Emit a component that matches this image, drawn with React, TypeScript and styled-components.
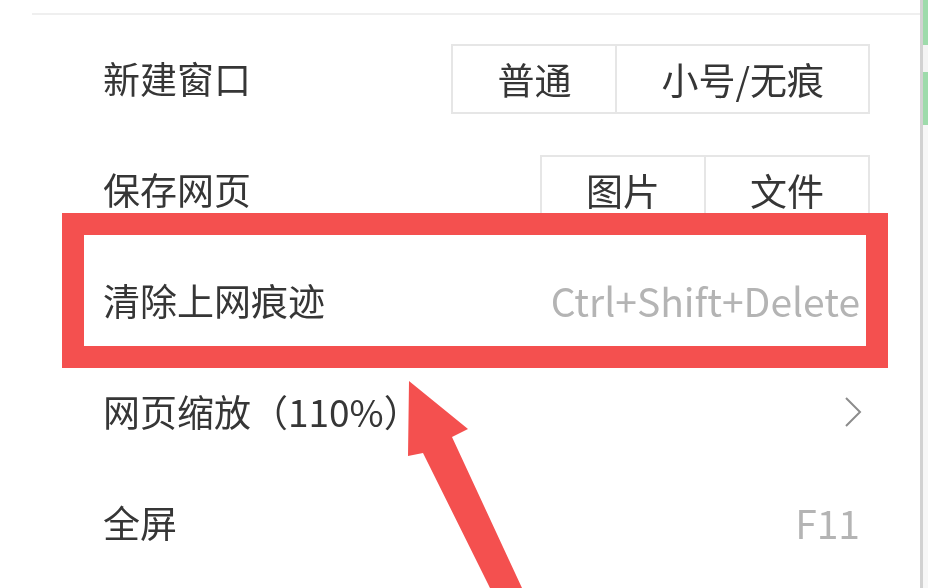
import * as React from 'react';
import styled, { createGlobalStyle } from 'styled-components';

const GlobalStyle = createGlobalStyle`
  html, body {
    margin: 0;
    padding: 0;
    background: #ffffff;
  }
  body {
    font-family: "Noto Sans CJK SC", "Noto Sans", sans-serif;
    color: #3a3a3a;
  }
`;

const Screen = styled.div`
  position: relative;
  display: flex;
  width: 928px;
  height: 588px;
  overflow: hidden;
  background: #fff;
  filter: blur(0.5px);
`;

const Menu = styled.div`
  flex: 1;
  display: flex;
  flex-direction: column;
  padding-left: 32px;
`;

const TopRule = styled.div`
  height: 2px;
  margin-top: 13px;
  margin-bottom: 8px;
  background: #efefef;
`;

const Row = styled.div`
  display: flex;
  align-items: center;
  justify-content: space-between;
  height: 111px;
  padding: 0 50px 0 71px;
`;

const Label = styled.span`
  font-size: 37px;
  line-height: 1;
  color: #363636;
  white-space: nowrap;
`;

const Shortcut = styled.span<{ $size?: number }>`
  font-family: "Noto Sans CJK SC", "Noto Sans", sans-serif;
  font-size: ${p => p.$size ?? 39}px;
  line-height: 1;
  color: #b4b4b4;
  margin-right: 10px;
  white-space: nowrap;
`;

const ButtonGroup = styled.div`
  display: flex;
  height: 70px;
  border: 2px solid #e6e6e6;
  box-sizing: border-box;
`;

const Segment = styled.div`
  display: flex;
  align-items: center;
  justify-content: center;
  padding: 0 44px;
  font-size: 37px;
  color: #363636;
  white-space: nowrap;

  & + & {
    border-left: 2px solid #e6e6e6;
  }
`;

const Chevron = styled.svg`
  width: 18px;
  height: 30px;
  margin-right: 8px;
`;

const PageEdge = styled.div`
  width: 5px;
  display: flex;
  flex-direction: column;
  border-left: 3px solid #d2d2d2;
`;

const Stripe = styled.div<{ $h: number; $color: string }>`
  height: ${p => p.$h}px;
  background: ${p => p.$color};
`;

const Highlight = styled.div`
  position: absolute;
  left: 62px;
  top: 213px;
  width: 826px;
  height: 155px;
  box-sizing: border-box;
  border: 22px solid #f4504f;
`;

const Arrow = styled.svg`
  position: absolute;
  left: 400px;
  top: 376px;
  width: 130px;
  height: 212px;
`;

export default function App() {
  return (
    <>
      <GlobalStyle />
      <Screen>
        <Menu>
          <TopRule />
          <Row>
            <Label>新建窗口</Label>
            <ButtonGroup>
              <Segment>普通</Segment>
              <Segment>小号/无痕</Segment>
            </ButtonGroup>
          </Row>
          <Row>
            <Label>保存网页</Label>
            <ButtonGroup>
              <Segment>图片</Segment>
              <Segment>文件</Segment>
            </ButtonGroup>
          </Row>
          <Row>
            <Label>清除上网痕迹</Label>
            <Shortcut>Ctrl+Shift+Delete</Shortcut>
          </Row>
          <Row>
            <Label>网页缩放（110%）</Label>
            <Chevron viewBox="0 0 18 30">
              <polyline points="2,1 16,15 2,29" fill="none" stroke="#8c8c8c" strokeWidth="2" />
            </Chevron>
          </Row>
          <Row>
            <Label>全屏</Label>
            <Shortcut>F11</Shortcut>
          </Row>
        </Menu>
        <PageEdge>
          <Stripe $h={45} $color="#9edbab" />
          <Stripe $h={27} $color="#f4f4f4" />
          <Stripe $h={53} $color="#9edbab" />
          <Stripe $h={463} $color="#f7f7f7" />
        </PageEdge>
        <Highlight />
        <Arrow viewBox="0 0 130 212">
          <polygon
            points="9,5 68,53 52,61 122,212 90,212 23,77 8,80"
            fill="#f4504f"
          />
        </Arrow>
      </Screen>
    </>
  );
}
